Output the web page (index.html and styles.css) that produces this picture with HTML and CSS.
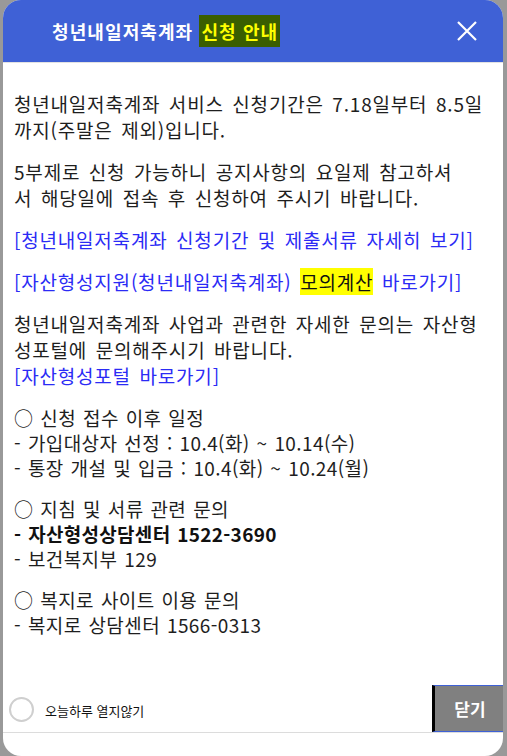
FILE: index.html
```html
<!DOCTYPE html>
<html lang="ko">
<head>
<meta charset="utf-8">
<link rel="stylesheet" href="styles.css">
</head>
<body>
<div class="modal">
  <div class="modal-head">
    <h1 class="title">청년내일저축계좌 <span class="title-hl">신청 안내</span></h1>
    <button class="close" aria-label="닫기">
      <svg width="20" height="20" viewBox="0 0 20 20"><path d="M1 1 L19 19 M19 1 L1 19" stroke="#fff" stroke-width="2.2" fill="none"/></svg>
    </button>
  </div>
  <div class="modal-body">
    <p>청년내일저축계좌 서비스 신청기간은 7.18일부터 8.5일<br>까지(주말은 제외)입니다.</p>
    <p>5부제로 신청 가능하니 공지사항의 요일제 참고하셔<br>서 해당일에 접속 후 신청하여 주시기 바랍니다.</p>
    <p><a class="link">[청년내일저축계좌 신청기간 및 제출서류 자세히 보기]</a></p>
    <p><a class="link">[자산형성지원(청년내일저축계좌) <span class="mark">모의계산</span> 바로가기]</a></p>
    <p>청년내일저축계좌 사업과 관련한 자세한 문의는 자산형<br>성포털에 문의해주시기 바랍니다.<br><a class="link">[자산형성포털 바로가기]</a></p>
    <p class="info">○ 신청 접수 이후 일정<br>- 가입대상자 선정 : 10.4(화) ~ 10.14(수)<br>- 통장 개설 및 입금 : 10.4(화) ~ 10.24(월)</p>
    <p class="info">○ 지침 및 서류 관련 문의<br><b>- 자산형성상담센터 1522-3690</b><br>- 보건복지부 129</p>
    <p class="info">○ 복지로 사이트 이용 문의<br>- 복지로 상담센터 1566-0313</p>
  </div>
  <div class="modal-foot">
    <label class="today"><span class="check"></span><span class="today-text">오늘하루 열지않기</span></label>
    <button class="close-btn">닫기</button>
  </div>
  <div class="modal-bottom"></div>
</div>
</body>
</html>
```
FILE: styles.css
```css
html, body {
  margin: 0;
  padding: 0;
}
body {
  background: #999999;
  width: 507px;
  height: 756px;
  overflow: hidden;
  font-family: "Noto Sans CJK KR", "Noto Sans", sans-serif;
}
.modal {
  margin-left: 3px;
  width: 500px;
  height: 756px;
  background: #fff;
  border-radius: 18px;
  overflow: hidden;
  display: flex;
  flex-direction: column;
}
.modal-head {
  height: 62px;
  background: #3f61d6;
  border-bottom: 1px solid #e2e2e2;
  display: flex;
  align-items: center;
  justify-content: space-between;
  padding: 0 26px 0 49px;
  flex-shrink: 0;
}
.title {
  margin: 0;
  font-size: 18px;
  font-weight: 700;
  color: #fff;
  letter-spacing: 1.1px;
  line-height: 24px;
}
.title-hl {
  background: #3a5e00;
  color: #ffff00;
  padding: 3px 2px 3px 2px;
}
.close {
  background: none;
  border: 0;
  padding: 0;
  width: 20px;
  height: 20px;
  display: flex;
  cursor: pointer;
}
.modal-body {
  flex: 1;
  padding: 28px 8px 0 11px;
  color: #1e1e1e;
  font-size: 19px;
  line-height: 26px;
  letter-spacing: 0.8px;
  word-spacing: 2.5px;
  white-space: nowrap;
}
.modal-body p {
  margin: 0 0 16px 0;
}
.modal-body p.info {
  line-height: 25px;
  letter-spacing: 0.4px;
  word-spacing: 1.2px;
}
.modal-body b {
  font-weight: 700;
  color: #111;
  letter-spacing: 0.3px;
}
.link {
  color: #2b2bf5;
  text-decoration: none;
}
.mark {
  background: #ffff00;
  color: #111;
}
.modal-foot {
  height: 47px;
  display: flex;
  align-items: stretch;
  border-bottom: 1px solid #dcdcdc;
  flex-shrink: 0;
}
.today {
  flex: 1;
  display: flex;
  align-items: center;
  gap: 11px;
  padding-left: 6px;
}
.check {
  width: 21px;
  height: 21px;
  border: 2px solid #cfcfcf;
  border-radius: 50%;
  margin-top: 2px;
}
.today-text {
  font-size: 13px;
  color: #111;
  margin-top: 3px;
  letter-spacing: 0;
  word-spacing: 0;
}
.close-btn {
  width: 74px;
  background: #808080;
  border: 1px solid #3f61d6;
  border-left: 3px solid #000;
  color: #fff;
  font-family: inherit;
  font-size: 17px;
  font-weight: 700;
  padding: 0;
  margin-right: -3px;
}
.modal-bottom {
  height: 23px;
  flex-shrink: 0;
}
```
